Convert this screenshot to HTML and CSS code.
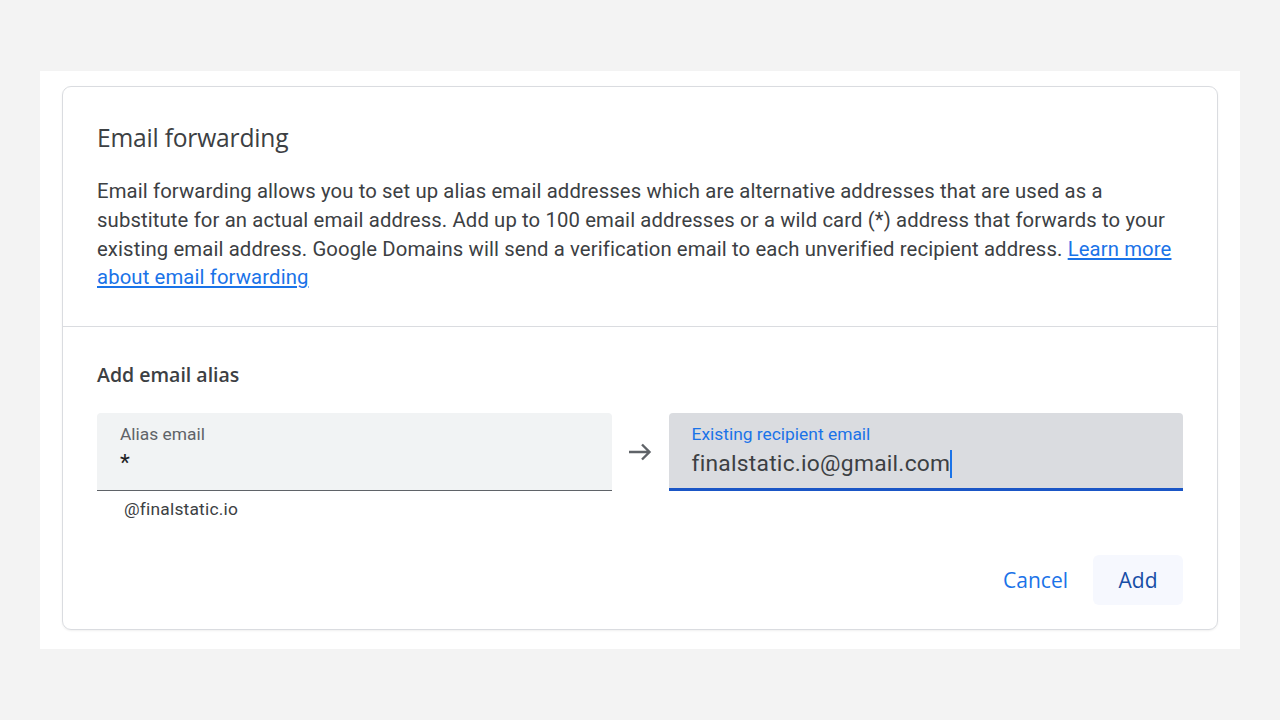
FILE: index.html
```html
<!DOCTYPE html>
<html>
<head>
<meta charset="utf-8">
<link rel="stylesheet" href="styles.css">
</head>
<body>
<div class="panel">
  <div class="card">
    <section class="intro">
      <h1 class="title">Email forwarding</h1>
      <p class="desc">Email forwarding allows you to set up alias email addresses which are alternative addresses that are used as a substitute for an actual email address. Add up to 100 email addresses or a wild card (*) address that forwards to your existing email address. Google Domains will send a verification email to each unverified recipient address. <a href="#" class="link">Learn more about email forwarding</a></p>
    </section>
    <section class="form">
      <h2 class="subtitle">Add email alias</h2>
      <div class="fields">
        <div class="col">
          <div class="field">
            <div class="label">Alias email</div>
            <div class="value">*</div>
          </div>
          <div class="helper">@finalstatic.io</div>
        </div>
        <div class="arrow">
          <svg width="24" height="24" viewBox="0 0 24 24"><path d="M1 12H21.5M14 4.5L21.5 12L14 19.5" fill="none" stroke="#5f6368" stroke-width="2.4"/></svg>
        </div>
        <div class="col">
          <div class="field focused">
            <div class="label">Existing recipient email</div>
            <div class="value">finalstatic.io@gmail.com<span class="caret"></span></div>
          </div>
        </div>
      </div>
      <div class="actions">
        <button class="btn cancel">Cancel</button>
        <button class="btn add">Add</button>
      </div>
    </section>
  </div>
</div>
</body>
</html>
```
FILE: styles.css
```css
html, body {
  margin: 0;
  padding: 0;
  background: #f3f3f3;
  width: 1280px;
  height: 720px;
  overflow: hidden;
}
body {
  padding-top: 71px;
  box-sizing: border-box;
  font-family: Roboto, "Liberation Sans", sans-serif;
}
.panel {
  margin: 0 40px;
  background: #ffffff;
  padding: 15px 22px 19px;
}
.card {
  border: 1px solid #dadce0;
  border-radius: 9px;
  box-shadow: 0 1px 2px rgba(60,64,67,0.08);
}
.intro {
  padding: 35px 34px 34px;
  border-bottom: 1px solid #dadce0;
}
.title {
  margin: 0;
  font-family: "Open Sans", sans-serif;
  font-weight: 400;
  font-size: 24.6px;
  line-height: 32px;
  color: #3c4043;
  letter-spacing: -0.2px;
}
.desc {
  margin: 23px 0 0;
  font-size: 20.3px;
  line-height: 28.75px;
  color: #3c4043;
  letter-spacing: 0.12px;
}
.link {
  color: #1a73e8;
  text-decoration: underline;
}
.form {
  padding: 36px 34px 24px;
}
.subtitle {
  margin: 0;
  font-family: "Open Sans", sans-serif;
  font-size: 19.5px;
  font-weight: 600;
  line-height: 24px;
  color: #3c4043;
}
.fields {
  margin-top: 26px;
  display: grid;
  grid-template-columns: 1fr 57px 1fr;
  align-items: start;
}
.field {
  background: #f1f3f4;
  border-radius: 4px 4px 0 0;
  border-bottom: 1px solid #5f6368;
  height: 77px;
  box-sizing: content-box;
  padding: 0 23px;
}
.field.focused {
  background: #dadce0;
  border-bottom: 3px solid #1a56c6;
  height: 75px;
}
.label {
  padding-top: 11px;
  font-size: 17.4px;
  line-height: 20px;
  color: #5f6368;
}
.focused .label {
  color: #1a73e8;
}
.value {
  margin-top: 6px;
  font-size: 22.8px;
  line-height: 26px;
  color: #202124;
  letter-spacing: 0.25px;
}
.focused .value {
  color: #3c4043;
  margin-top: 7px;
}
.caret {
  display: inline-block;
  width: 1.5px;
  height: 28px;
  background: #1a73e8;
  vertical-align: top;
  margin-top: -1px;
}
.helper {
  margin-top: 8px;
  padding-left: 27px;
  font-size: 17.4px;
  line-height: 20px;
  color: #3c4043;
  letter-spacing: 0.2px;
}
.arrow {
  height: 78px;
  display: flex;
  align-items: center;
  justify-content: center;
}
.actions {
  margin-top: 36px;
  display: flex;
  justify-content: flex-end;
}
.btn {
  height: 50px;
  border: 0;
  border-radius: 6px;
  background: transparent;
  font-family: "Open Sans", sans-serif;
  font-size: 21px;
  font-weight: 500;
  padding: 0 25px;
  cursor: pointer;
}
.cancel {
  color: #1a73e8;
}
.add {
  background: #f6f8fe;
  color: #174ea6;
  width: 90px;
  padding: 0;
}
```
